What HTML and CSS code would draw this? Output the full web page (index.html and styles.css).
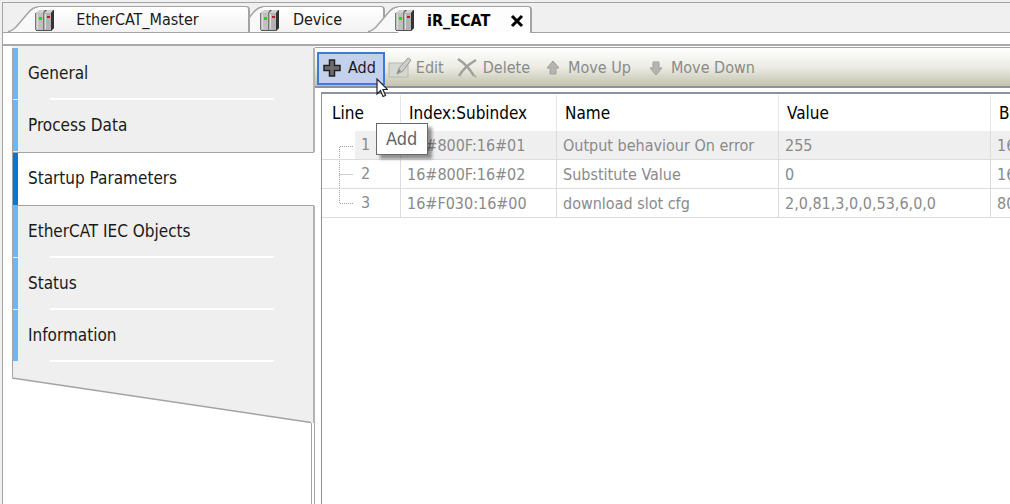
FILE: index.html
```
<!DOCTYPE html>
<html lang="en">
<head>
    <meta charset="UTF-8">
    <meta name="viewport" content="width=device-width, initial-scale=1.0">
    <title>iR_ECAT</title>
    <link rel="stylesheet" href="styles.css">
</head>
<body>
    <svg class="defs" aria-hidden="true">
        <symbol id="device" viewBox="0 0 20 23">
            <path d="M1 4L5 1H19V19L16 22H1Z" fill="#555"/>
            <path d="M1 4L4 1H10L8 4ZM9 4L12 1H18L16 4Z" fill="#d0d0d0"/>
            <path d="M16 4L19 1V19L16 22Z" fill="#333"/>
            <rect x="1" y="4" width="7" height="17" fill="#c0c0c0"/>
            <rect x="9" y="4" width="7" height="17" fill="#b2b2b2"/>
            <path d="M2.500 5V20M10.500 5V20" stroke="#dedede"/>
            <path d="M8.500 4V21M0.500 4V21" stroke="#777"/>
            <rect x="4" y="8" width="3" height="3" fill="#1cd81c"/>
            <rect x="12" y="7" width="3" height="2" fill="#b02030"/>
        </symbol>
        <symbol id="slant" viewBox="0 0 30 26">
            <path d="M0 26C3 26 5 24 8 21L20 7C24 2 27 1 30 1V26Z" fill="#f8f8f8"/>
            <path d="M0 25.500C3 25.500 5 24 8 21L20 7C24 2 27 1 30 1" fill="none" stroke="#a3a3a3" stroke-width="1.500"/>
        </symbol>
    </svg>

    <div class="window">
        <div class="tabs" role="tablist">
            <button class="tab tab-first" role="tab">
                <svg class="slant"><use href="#slant"/></svg>
                <span class="tab-body"><svg class="device"><use href="#device"/></svg><span class="tab-text">EtherCAT_Master</span></span>
            </button>
            <button class="tab tab-second" role="tab">
                <svg class="slant"><use href="#slant"/></svg>
                <span class="tab-body"><svg class="device"><use href="#device"/></svg><span class="tab-text">Device</span></span>
            </button>
            <button class="tab tab-active" role="tab" aria-selected="true">
                <svg class="slant"><use href="#slant"/></svg>
                <span class="tab-body"><svg class="device"><use href="#device"/></svg><span class="tab-text">iR_ECAT</span>
                    <svg class="close" viewBox="0 0 14 14"><path d="M2 2L12 12M12 2L2 12" stroke="#000" stroke-width="3"/></svg>
                </span>
            </button>
        </div>

        <div class="page">
            <nav class="sidebar">
                <a class="item" href="#">General</a>
                <a class="item no-line" href="#">Process Data</a>
                <a class="item selected" href="#">Startup Parameters</a>
                <a class="item" href="#">EtherCAT IEC Objects</a>
                <a class="item" href="#">Status</a>
                <a class="item" href="#">Information</a>
                <div class="sidebar-end"></div>
                <svg class="sidebar-cut" viewBox="0 0 303 46" preserveAspectRatio="none">
                    <path d="M0 0H303V46H299L0 1Z" fill="#efefef"/>
                    <path d="M0 1L299 45.500" fill="none" stroke="#a3a3a3" stroke-width="1.500"/>
                    <path d="M302 0V46" stroke="#b4b4b4" stroke-width="2"/>
                </svg>
                <div class="sidebar-rest"></div>
            </nav>

            <main class="content">
                <div class="toolbar">
                    <button class="tool tool-add">
                        <svg width="20" height="20" viewBox="0 0 20 20"><path d="M7.500 2H12.500V7.500H18V12.500H12.500V18H7.500V12.500H2V7.500H7.500Z" fill="#6c6c6c" stroke="#222" stroke-width="1.500"/></svg>
                        Add
                        <svg class="cursor" viewBox="0 0 12 20"><path d="M1 1V16L4.500 12.500L7 18.500L9.500 17.500L7 11.500H11.500Z" fill="#fff" stroke="#223" stroke-width="1.200"/></svg>
                        <span class="tooltip" role="tooltip">Add</span>
                    </button>
                    <button class="tool tool-edit" disabled>
                        <svg width="24" height="22" viewBox="0 0 24 22"><rect x="1" y="6" width="19" height="14" fill="#d8d8d2" stroke="#b8b8b3"/><path d="M9 17L11 11L20 1L23 3L15 14Z" fill="#cdcdc9" stroke="#9a9a96"/><path d="M9 17L11 12L13 14Z" fill="#858585"/></svg>
                        Edit
                    </button>
                    <button class="tool tool-delete" disabled>
                        <svg width="20" height="20" viewBox="0 0 20 20"><path d="M1 1C7 5 13 11 17 18M19 2C12 6 6 11 2 18" fill="none" stroke="#a0a09c" stroke-width="2.500"/><circle cx="18.500" cy="18.500" r="1" fill="#a0a09c"/></svg>
                        Delete
                    </button>
                    <button class="tool tool-up" disabled>
                        <svg width="14" height="16" viewBox="0 0 14 16"><path d="M7 1L13 8H10V14H4V8H1Z" fill="#b5b5b2" stroke="#a0a09d"/></svg>
                        Move Up
                    </button>
                    <button class="tool tool-down" disabled>
                        <svg width="14" height="16" viewBox="0 0 14 16"><path d="M7 15L13 8H10V2H4V8H1Z" fill="#b5b5b2" stroke="#a0a09d"/></svg>
                        Move Down
                    </button>
                </div>

                <div class="table-box">
                    <table>
                        <colgroup>
                            <col class="col-line">
                            <col class="col-index">
                            <col class="col-name">
                            <col class="col-value">
                            <col class="col-bits">
                        </colgroup>
                        <thead>
                            <tr>
                                <th>Line</th>
                                <th>Index:Subindex</th>
                                <th>Name</th>
                                <th>Value</th>
                                <th>Bitlength</th>
                            </tr>
                        </thead>
                        <tbody>
                            <tr class="current">
                                <td class="line-cell"><div class="line"><svg class="tree" viewBox="0 0 32 27"><path d="M31 14.500H17.500V27"/></svg><span>1</span></div></td>
                                <td>16#800F:16#01</td>
                                <td>Output behaviour On error</td>
                                <td>255</td>
                                <td>16</td>
                            </tr>
                            <tr>
                                <td class="line-cell"><div class="line"><svg class="tree" viewBox="0 0 32 27"><path d="M17.500 0V27M17.500 13.500H31"/></svg><span>2</span></div></td>
                                <td>16#800F:16#02</td>
                                <td>Substitute Value</td>
                                <td>0</td>
                                <td>16</td>
                            </tr>
                            <tr>
                                <td class="line-cell"><div class="line"><svg class="tree" viewBox="0 0 32 27"><path d="M17.500 0V13.500H31"/></svg><span>3</span></div></td>
                                <td>16#F030:16#00</td>
                                <td>download slot cfg</td>
                                <td>2,0,81,3,0,0,53,6,0,0</td>
                                <td>80</td>
                            </tr>
                        </tbody>
                    </table>
                </div>
            </main>
        </div>
    </div>
</body>
</html>
```
FILE: styles.css
```
* {
    box-sizing: border-box;
}
body {
    margin: 0;
    padding: 2px 0 0 2px;
    background-color: #f0f0f0;
    font-family: "DejaVu Sans Condensed", "Noto Sans", sans-serif;
    font-size: 16px;
    line-height: 20px;
    color: #1a1a1a;
    overflow: hidden;
}
button {
    margin: 0;
    padding: 0;
    border: none;
    background: none;
    font: inherit;
    color: inherit;
}
.defs {
    position: absolute;
    width: 0;
    height: 0;
}
.window {
    display: flex;
    flex-direction: column;
    height: calc(100vh - 2px);
    border-top: 1px solid #a3a3a3;
    border-left: 1px solid #a3a3a3;
}

/* document tabs */
.tabs {
    display: flex;
    align-items: flex-end;
    height: 30px;
    padding-left: 5px;
    border-bottom: 1px solid #a3a3a3;
    isolation: isolate;
}
.tab {
    display: flex;
    height: 26px;
    position: relative;
}
.tab-first {
    width: 242px;
    z-index: 2;
}
.tab-second {
    width: 152px;
    margin-left: -17px;
    z-index: 1;
}
.tab-active {
    width: 164px;
    height: 27px;
    margin-left: -17px;
    margin-bottom: -1px;
    z-index: 3;
    font-weight: bold;
    color: #000;
}
.slant {
    flex: none;
    width: 30px;
    height: 26px;
}
.tab-body {
    flex: 1;
    display: flex;
    align-items: center;
    padding-top: 1px;
    border-top: 1px solid #a3a3a3;
    border-right: 2px solid #a3a3a3;
    border-top-right-radius: 4px;
    background: linear-gradient(#fff, #f2f2f2);
}
.tab-active .tab-body {
    background: #fdfdfd;
}
.device {
    flex: none;
    width: 20px;
    height: 23px;
    margin-left: -3px;
}
.tab-text {
    flex: 1;
    padding-right: 28px;
    text-align: center;
}
.tab-active .tab-text {
    padding: 0 0 0 12px;
    text-align: left;
}
.close {
    width: 14px;
    height: 14px;
    margin-right: 6px;
}

/* editor page */
.page {
    flex: 1;
    display: flex;
    margin-top: 11px;
    border-top: 2px solid #a9a9a9;
    box-shadow: 0 -11px #fff;
    background-color: #fff;
    padding-left: 9px;
}
.sidebar {
    flex: none;
    display: flex;
    flex-direction: column;
    width: 303px;
    padding-top: 2px;
    background: linear-gradient(#efefef, #efefef) no-repeat 0 0 / 100% 2px;
    font-size: 17px;
}
.item {
    position: relative;
    height: 52px;
    padding: 15px;
    border-left: 1px solid #a3a3a3;
    border-right: 2px solid #b4b4b4;
    background: linear-gradient(#69b8fd, #69b8fd) no-repeat 0 0 / 5px calc(100% - 1px) #efefef;
    color: #1a1a1a;
    text-decoration: none;
}
.item::after {
    content: "";
    position: absolute;
    left: 37px;
    right: 39px;
    bottom: 0;
    border-bottom: 2px solid #fff;
}
.no-line::after,
.selected::after {
    display: none;
}
.selected {
    height: 54px;
    border-top: 1px solid #a3a3a3;
    border-bottom: 1px solid #a3a3a3;
    border-right-color: #fff;
    background: linear-gradient(#0078d7, #0078d7) no-repeat 0 0 / 5px 100% #fff;
}
.sidebar-end {
    height: 15px;
    border-left: 1px solid #a3a3a3;
    border-right: 2px solid #b4b4b4;
    background-color: #efefef;
}
.sidebar-cut {
    width: 100%;
    height: 46px;
}
.sidebar-rest {
    flex: 1;
    border-right: 4px double #a3a3a3;
}
.content {
    flex: 1;
    min-width: 0;
    display: flex;
    flex-direction: column;
    border-top: 1px solid #fff;
}
.toolbar {
    display: flex;
    align-items: center;
    height: 41px;
    padding: 3px 2px 1px;
    border-top: 1px solid #a3a3a3;
    border-bottom: 2px solid #8f8f9d;
    background: linear-gradient(#fff, #ecece4 50%, #c3c3ae);
    color: #8a8a8a;
}
.tool {
    display: flex;
    align-items: center;
    height: 33px;
    gap: 6px;
    color: #8a8a8a;
    white-space: nowrap;
}
.tool-add {
    position: relative;
    padding: 0 7px 0 3px;
    border: 2px solid #3f7ad6;
    background-color: #c4d1ed;
    color: #1a1a1a;
}
.tool-edit {
    margin-left: 3px;
    gap: 4px;
}
.tool-delete {
    margin-left: 13px;
}
.tool-up {
    margin-left: 16px;
    gap: 8px;
}
.tool-down {
    margin-left: 18px;
    gap: 8px;
}
.cursor {
    position: absolute;
    left: 57px;
    top: 24px;
    width: 12px;
    height: 20px;
    z-index: 2;
}
.tooltip {
    position: absolute;
    left: 57px;
    top: 69px;
    padding: 4px 10px 4px 9px;
    border: 1px solid #6a6a6a;
    background-color: #fff;
    box-shadow: 4px 4px 3px rgba(0, 0, 0, 0.4);
    font-size: 18px;
    line-height: 22px;
    color: #646464;
    z-index: 1;
}

/* parameter table */
.table-box {
    flex: 1;
    margin: 4px 0 0 6px;
    padding-top: 1px;
    border-top: 2px solid #8d919b;
    border-left: 1px solid #8d919b;
    overflow: hidden;
}
table {
    width: 780px;
    table-layout: fixed;
    border-collapse: separate;
    border-spacing: 0;
}
.col-line {
    width: 79px;
}
.col-index {
    width: 156px;
}
.col-name {
    width: 222px;
}
.col-value {
    width: 212px;
}
th {
    height: 36px;
    padding: 0 8px;
    border-right: 1px solid #e6e6e6;
    font-size: 17px;
    font-weight: normal;
    text-align: left;
    white-space: nowrap;
    color: #000;
}
th:first-child {
    padding-left: 10px;
}
td {
    height: 29px;
    padding: 1px 6px 0;
    border-right: 1px solid #dcdcdc;
    border-bottom: 1px solid #dcdcdc;
    color: #8a8a8a;
    white-space: nowrap;
}
.current td {
    background-color: #efefef;
}
.current .line-cell {
    background: linear-gradient(to right, #fff 33px, #efefef 33px);
}
.line-cell {
    padding: 0;
}
.line {
    display: flex;
    align-items: center;
    gap: 7px;
}
.tree {
    width: 32px;
    height: 27px;
    fill: none;
    stroke: #a0a0a0;
    stroke-dasharray: 1 1;
}
```
